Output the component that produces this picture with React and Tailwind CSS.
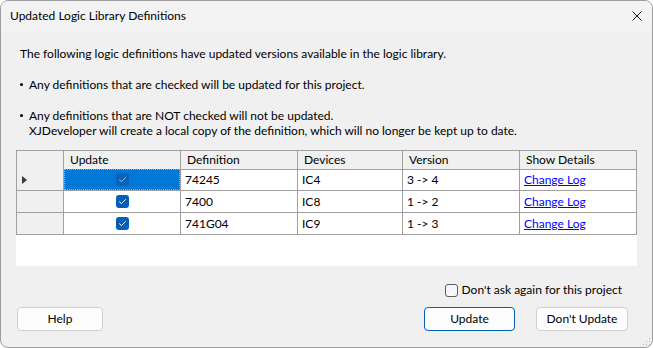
import { useState } from 'react';

const ROWS = [
  { def: '74245', dev: 'IC4', ver: '3 -> 4' },
  { def: '7400', dev: 'IC8', ver: '1 -> 2' },
  { def: '741G04', dev: 'IC9', ver: '1 -> 3' },
];

const COLS = 'grid grid-cols-[47px_117px_117px_105px_117px_117px]';

function Check({ dim }) {
  return (
    <span
      className={`flex h-[13px] w-[13px] items-center justify-center rounded-[3px] ${
        dim ? 'bg-[#0a63b8]' : 'bg-[#005fb8]'
      }`}
    >
      <svg viewBox="0 0 13 13" className="h-[13px] w-[13px]" fill="none" aria-hidden="true">
        <path
          d="M3.5 6.8 L5.5 8.6 L9.5 4.5"
          stroke={dim ? '#9cc4ea' : '#ffffff'}
          strokeWidth="1"
          strokeLinecap="round"
          strokeLinejoin="round"
        />
      </svg>
    </span>
  );
}

function Button({ children, primary, width }) {
  return (
    <button
      className={`flex h-[24px] items-center justify-center rounded-[4px] bg-[#fdfdfd] text-[12px] text-black ${width} ${
        primary ? 'border border-[#005fb8]' : 'border border-[#d0d0d0]'
      }`}
    >
      {children}
    </button>
  );
}

function Bullet() {
  return (
    <span className="inline-flex h-[15px] w-[9px] items-center align-top">
      <span className="h-[3px] w-[3px] rounded-full bg-black" />
    </span>
  );
}

export default function App() {
  const [dontAsk, setDontAsk] = useState(false);

  return (
    <div className="flex h-[348px] w-[653px] flex-col overflow-hidden rounded-[8px] border border-[#9c9c9c] bg-[#f0f0f0] font-['Segoe_UI','Lato',sans-serif] text-[12px] text-black">
      {/* title bar */}
      <div className="flex h-[30px] shrink-0 items-center justify-between bg-[#f3f3f3] pl-[9px] pr-[10px]">
        <span className="leading-none">Updated Logic Library Definitions</span>
        <svg viewBox="0 0 10 10" className="h-[10px] w-[10px]" aria-hidden="true">
          <path d="M0.5 0.5 L9.5 9.5 M9.5 0.5 L0.5 9.5" stroke="#1a1a1a" strokeWidth="1" />
        </svg>
      </div>

      {/* message */}
      <div className="flex flex-col pl-[19px] pt-[15px] leading-[15px]">
        <p>The following logic definitions have updated versions available in the logic library.</p>
        <p className="mt-[16px]"><Bullet />Any definitions that are checked will be updated for this project.</p>
        <p className="mt-[16px]"><Bullet />Any definitions that are NOT checked will not be updated.</p>
        <p className="pl-[9px]">XJDeveloper will create a local copy of the definition, which will no longer be kept up to date.</p>
      </div>

      {/* grid */}
      <div className="mx-[15px] mt-[12px] h-[116px] shrink-0 bg-white">
        <div className="w-[621px] border-l border-t border-[#a0a0a0]">
          <div className={`${COLS} h-[18px] bg-[#f0f0f0]`}>
            <div className="border-b border-r border-[#a0a0a0]" />
            {['Update', 'Definition', 'Devices', 'Version', 'Show Details'].map((h) => (
              <div key={h} className="flex items-center border-b border-r border-[#a0a0a0] pl-[6px]">
                {h}
              </div>
            ))}
          </div>
          {ROWS.map((r, i) => (
            <div key={r.def} className={`${COLS} h-[22px] bg-white`}>
              <div className="flex items-center border-b border-r border-[#a0a0a0] bg-[#f0f0f0] pl-[5px]">
                {i === 0 && (
                  <svg viewBox="0 0 5 8" className="h-[8px] w-[5px]" aria-hidden="true">
                    <path d="M0 0 L5 4 L0 8 Z" fill="#3a3a3a" />
                  </svg>
                )}
              </div>
              <div className="border-b border-r border-[#a0a0a0]">
                {i === 0 ? (
                  <div className="flex h-full items-center justify-center border border-dotted border-[#f59b2b] bg-[#0078d7]">
                    <Check dim />
                  </div>
                ) : (
                  <div className="flex h-full items-center justify-center">
                    <Check />
                  </div>
                )}
              </div>
              <div className="flex items-center border-b border-r border-[#a0a0a0] pl-[4px]">{r.def}</div>
              <div className="flex items-center border-b border-r border-[#a0a0a0] pl-[4px]">{r.dev}</div>
              <div className="flex items-center border-b border-r border-[#a0a0a0] pl-[4px]">{r.ver}</div>
              <div className="flex items-center border-b border-r border-[#a0a0a0] pl-[4px]">
                <a href="#" className="text-[#0000ff] underline">Change Log</a>
              </div>
            </div>
          ))}
        </div>
      </div>

      {/* don't ask */}
      <div className="mt-[17px] flex h-[14px] justify-end pr-[30px]">
        <label className="flex items-center gap-[4px]">
          <button
            onClick={() => setDontAsk(!dontAsk)}
            className="h-[13px] w-[13px] rounded-[3px] border border-[#5c5c5c] bg-[#f7f7f7]"
          />
          <span>Don&apos;t ask again for this project</span>
        </label>
      </div>

      {/* buttons */}
      <div className="mt-[10px] flex items-center pl-[16px] pr-[24px]">
        <Button width="w-[86px]">Help</Button>
        <div className="ml-auto flex gap-[21px]">
          <Button primary width="w-[91px]">Update</Button>
          <Button width="w-[92px]">Don&apos;t Update</Button>
        </div>
      </div>

      {/* resize grip */}
      <div className="mt-auto flex justify-end pb-[1px] pr-[1px]">
        <svg viewBox="0 0 8 8" className="h-[8px] w-[8px]" aria-hidden="true">
          <rect x="6" y="0" width="1" height="1" fill="#b5b5b5" />
          <rect x="3" y="3" width="1" height="1" fill="#b5b5b5" />
          <rect x="6" y="3" width="1" height="1" fill="#b5b5b5" />
          <rect x="0" y="6" width="1" height="1" fill="#b5b5b5" />
          <rect x="3" y="6" width="1" height="1" fill="#b5b5b5" />
          <rect x="6" y="6" width="1" height="1" fill="#b5b5b5" />
        </svg>
      </div>
    </div>
  );
}
